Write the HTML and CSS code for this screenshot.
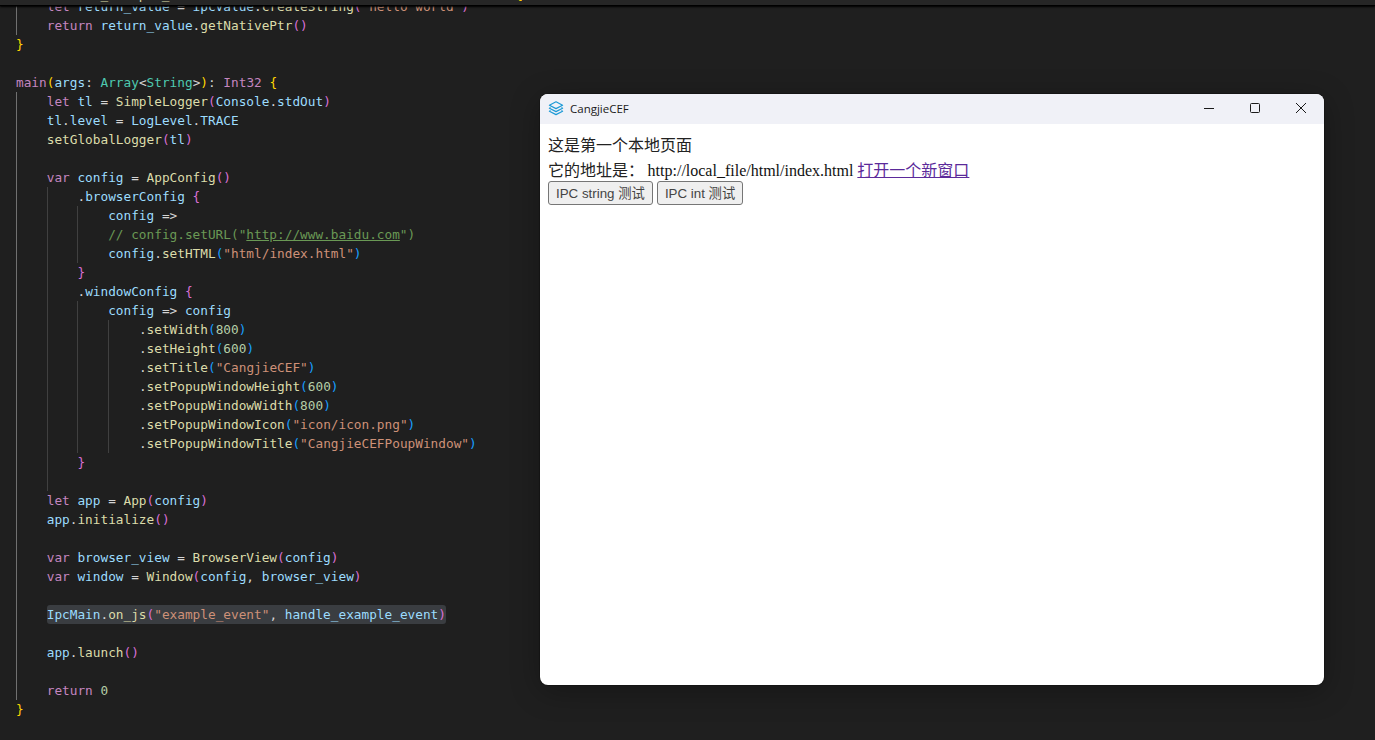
FILE: index.html
```html
<!DOCTYPE html>
<html lang="zh">
<head>
    <meta charset="UTF-8">
    <meta name="viewport" content="width=device-width, initial-scale=1.0">
    <title>CangjieCEF</title>
    <link rel="stylesheet" href="styles.css">
</head>
<body>
    <div class="editor">
        <!-- sticky scroll header, only the descenders stick out -->
        <div class="sticky">
            <div class="sticky-line line"><span class="k">func</span> <span class="f">handle_example_event</span><span class="by">(</span><span class="v">value</span>: <span class="t">CPointer</span>&lt;<span class="t">Unit</span>&gt;<span class="by">)</span>: <span class="t">CPointer</span>&lt;<span class="t">Unit</span>&gt; <span class="by">{</span></div>
        </div>

        <div class="code">
            <div class="block">
                <div class="line"><span class="k">let</span> <span class="v">return_value</span> = <span class="v">ipcValue</span>.<span class="f">createString</span><span class="bp">(</span><span class="s">"hello world"</span><span class="bp">)</span></div>
                <div class="line"><span class="k">return</span> <span class="v">return_value</span>.<span class="f">getNativePtr</span><span class="bp">()</span></div>
            </div>
            <div class="line"><span class="by">}</span></div>
            <div class="line"></div>
            <div class="line"><span class="k">main</span><span class="by">(</span><span class="v">args</span>: <span class="t">Array</span>&lt;<span class="t">String</span>&gt;<span class="by">)</span>: <span class="k">Int32</span> <span class="by">{</span></div>
            <div class="block active">
                <div class="line"><span class="k">let</span> <span class="v">tl</span> = <span class="f">SimpleLogger</span><span class="bp">(</span><span class="v">Console</span>.<span class="v">stdOut</span><span class="bp">)</span></div>
                <div class="line"><span class="v">tl</span>.<span class="v">level</span> = <span class="v">LogLevel</span>.<span class="v">TRACE</span></div>
                <div class="line"><span class="f">setGlobalLogger</span><span class="bp">(</span><span class="v">tl</span><span class="bp">)</span></div>
                <div class="line"></div>
                <div class="line"><span class="k">var</span> <span class="v">config</span> = <span class="f">AppConfig</span><span class="bp">()</span></div>
                <div class="block">
                    <div class="line">.<span class="v">browserConfig</span> <span class="bp">{</span></div>
                    <div class="block">
                        <div class="line"><span class="v">config</span> =&gt;</div>
                        <div class="line"><span class="c">// config.setURL("<span class="link">http://www.baidu.com</span>")</span></div>
                        <div class="line"><span class="v">config</span>.<span class="f">setHTML</span><span class="bb">(</span><span class="s">"html/index.html"</span><span class="bb">)</span></div>
                    </div>
                    <div class="line"><span class="bp">}</span></div>
                    <div class="line">.<span class="v">windowConfig</span> <span class="bp">{</span></div>
                    <div class="block">
                        <div class="line"><span class="v">config</span> =&gt; <span class="v">config</span></div>
                        <div class="block">
                            <div class="line">.<span class="f">setWidth</span><span class="bb">(</span><span class="n">800</span><span class="bb">)</span></div>
                            <div class="line">.<span class="f">setHeight</span><span class="bb">(</span><span class="n">600</span><span class="bb">)</span></div>
                            <div class="line">.<span class="f">setTitle</span><span class="bb">(</span><span class="s">"CangjieCEF"</span><span class="bb">)</span></div>
                            <div class="line">.<span class="f">setPopupWindowHeight</span><span class="bb">(</span><span class="n">600</span><span class="bb">)</span></div>
                            <div class="line">.<span class="f">setPopupWindowWidth</span><span class="bb">(</span><span class="n">800</span><span class="bb">)</span></div>
                            <div class="line">.<span class="f">setPopupWindowIcon</span><span class="bb">(</span><span class="s">"icon/icon.png"</span><span class="bb">)</span></div>
                            <div class="line">.<span class="f">setPopupWindowTitle</span><span class="bb">(</span><span class="s">"CangjieCEFPoupWindow"</span><span class="bb">)</span></div>
                        </div>
                    </div>
                    <div class="line"><span class="bp">}</span></div>
                    <div class="line"></div>
                </div>
                <div class="line"><span class="k">let</span> <span class="v">app</span> = <span class="f">App</span><span class="bp">(</span><span class="v">config</span><span class="bp">)</span></div>
                <div class="line"><span class="v">app</span>.<span class="f">initialize</span><span class="bp">()</span></div>
                <div class="line"></div>
                <div class="line"><span class="k">var</span> <span class="v">browser_view</span> = <span class="f">BrowserView</span><span class="bp">(</span><span class="v">config</span><span class="bp">)</span></div>
                <div class="line"><span class="k">var</span> <span class="v">window</span> = <span class="f">Window</span><span class="bp">(</span><span class="v">config</span>, <span class="v">browser_view</span><span class="bp">)</span></div>
                <div class="line"></div>
                <div class="line"><span class="selected"><span class="v">IpcMain</span>.<span class="f">on_js</span><span class="bp">(</span><span class="s">"example_event"</span>, <span class="v">handle_example_event</span><span class="bp">)</span></span></div>
                <div class="line"></div>
                <div class="line"><span class="v">app</span>.<span class="f">launch</span><span class="bp">()</span></div>
                <div class="line"></div>
                <div class="line"><span class="k">return</span> <span class="n">0</span></div>
            </div>
            <div class="line"><span class="by">}</span></div>
        </div>
    </div>

    <div class="window">
        <div class="titlebar">
            <svg class="app-icon" width="16" height="16" viewBox="0 0 16 16" fill="none" stroke="#1e9ad6" stroke-width="1.2" stroke-linejoin="round">
                <path d="M8 1.8 14.6 5.2 8 8.6 1.4 5.2Z"/>
                <path d="M2.6 7.6 1.4 8.2 8 11.6 14.6 8.2 13.4 7.6"/>
                <path d="M2.6 10.6 1.4 11.2 8 14.6 14.6 11.2 13.4 10.6"/>
            </svg>
            <span class="title">CangjieCEF</span>
            <div class="controls">
                <div class="control">
                    <svg width="12" height="12" viewBox="0 0 12 12" fill="none" stroke="#1a1a1a"><path d="M1 6.5H11"/></svg>
                </div>
                <div class="control">
                    <svg width="12" height="12" viewBox="0 0 12 12" fill="none" stroke="#1a1a1a"><rect x="1.5" y="1.5" width="9" height="9" rx="1"/></svg>
                </div>
                <div class="control">
                    <svg width="12" height="12" viewBox="0 0 12 12" fill="none" stroke="#1a1a1a"><path d="M1 1 11 11M11 1 1 11"/></svg>
                </div>
            </div>
        </div>
        <div class="page">
            <div class="page-line">这是第一个本地页面</div>
            <div class="page-line">它的地址是： <span class="url">http://local_file/html/index.html </span><a href="#new" class="visited">打开一个新窗口</a></div>
            <div class="buttons">
                <button class="ipc-btn">IPC string 测试</button>
                <button class="ipc-btn">IPC int 测试</button>
            </div>
        </div>
    </div>
</body>
</html>
```

FILE: styles.css
```css
html, body {
    height: 100%;
}
body {
    margin: 0;
    overflow: hidden;
    background-color: #1f1f1f;
}

/* editor */
.editor {
    position: relative;
    height: 740px;
    overflow: hidden;
    font-family: "DejaVu Sans Mono", monospace;
    font-size: 12.75px;
    color: #d4d4d4;
}
.sticky {
    position: absolute;
    top: 0;
    left: 0;
    right: 0;
    height: 5px;
    overflow: hidden;
    padding-left: 16px;
    background-color: #262626;
    border-bottom: 1px solid #000;
    box-shadow: 0 1px 2px #000;
}
.sticky-line {
    margin-top: -15px;
}
.code {
    margin-top: -3px;
    padding-left: 16px;
}
.line {
    height: 19px;
    line-height: 19px;
    white-space: pre;
}
.block {
    border-left: 1px solid #404040;
    padding-left: 29.72px;
}
.block.active {
    border-left-color: #707070;
}
.code > .block:first-child {
    border-left-color: #707070;
}
.selected {
    display: inline-block;
    background-color: #3a3d41;
    border-radius: 3px;
}

/* syntax colours */
.k { color: #c586c0; }
.v { color: #9cdcfe; }
.f { color: #dcdcaa; }
.t { color: #4ec9b0; }
.s { color: #ce9178; }
.n { color: #b5cea8; }
.c { color: #6a9955; }
.by { color: #ffd700; }
.bp { color: #da70d6; }
.bb { color: #179fff; }
.link { text-decoration: underline; }

/* popup window */
.window {
    position: absolute;
    left: 540px;
    top: 94px;
    width: 784px;
    height: 591px;
    background-color: #fff;
    border-radius: 8px;
    overflow: hidden;
    box-shadow: 0 0 0 1px rgba(0, 0, 0, 0.2), 0 6px 30px rgba(0, 0, 0, 0.3);
}
.titlebar {
    display: flex;
    align-items: center;
    box-sizing: border-box;
    height: 30px;
    padding: 0 0 2px 8px;
    background-color: #f0f1f7;
}
.app-icon {
    flex: none;
}
.title {
    margin-left: 6px;
    font-family: "Open Sans", sans-serif;
    font-size: 11.5px;
    color: #1a1a1a;
}
.controls {
    display: flex;
    margin-left: auto;
}
.control {
    display: flex;
    align-items: center;
    justify-content: center;
    width: 46px;
    height: 28px;
}
.page {
    padding: 8px 8px 0;
    font-family: "Noto Sans CJK SC", sans-serif;
    font-size: 16px;
    color: #222;
}
.page-line {
    height: 24px;
    line-height: 24px;
    white-space: nowrap;
}
.page-line + .page-line {
    margin-top: 1px;
}
.url {
    font-family: "Liberation Serif", serif;
    color: #111;
}
.visited {
    color: #5b2a9a;
}
.buttons {
    display: flex;
    gap: 4px;
}
.ipc-btn {
    height: 24px;
    padding: 0 7px 2px;
    font-family: "Liberation Sans", "Noto Sans CJK SC", sans-serif;
    font-size: 13.33px;
    color: #444;
    background-color: #efefef;
    border: 1px solid #767676;
    border-radius: 3px;
}
```
